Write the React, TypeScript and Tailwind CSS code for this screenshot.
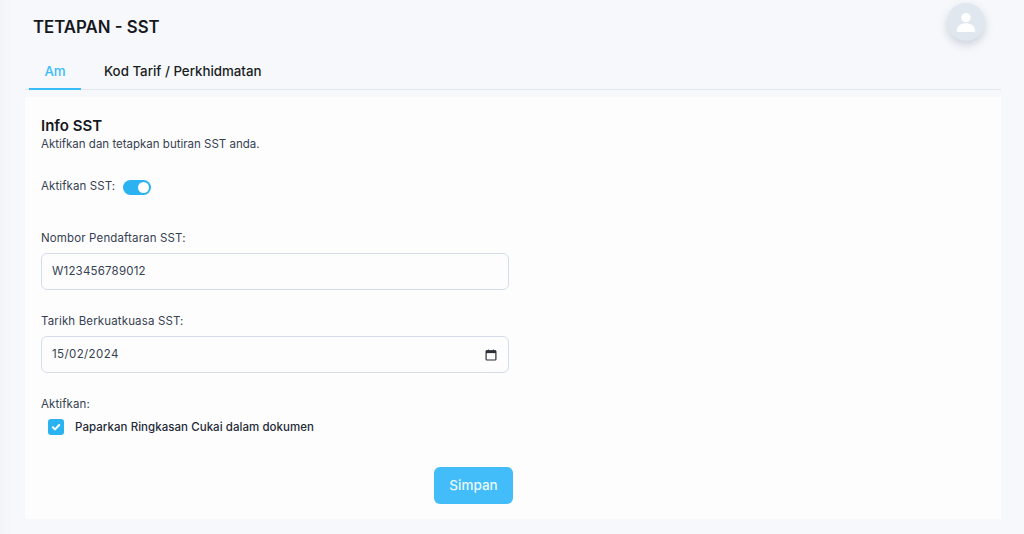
import React from "react";

export default function App() {
  return (
    <div className="flex h-[534px] w-[1024px] overflow-hidden bg-[#f6f8fb] font-['Inter','Liberation_Sans',sans-serif] antialiased">
      <div className="h-full w-[12px] shrink-0 bg-gradient-to-r from-[#f2f4f7] to-[#f6f8fb]" />
      <main className="flex min-w-0 flex-1 flex-col pl-[13px] pr-[23px]">
        <header className="flex h-[57px] shrink-0 items-start justify-between">
          <h1 className="ml-[8px] mt-[15px] text-[16.8px] leading-[24px] font-semibold text-[#16181d]">TETAPAN - SST</h1>
          <div className="mr-[16px] mt-[3px] flex h-[38px] w-[38px] items-center justify-center rounded-full bg-[#e1e7ef] shadow-[0_4px_8px_rgba(100,116,139,0.28)]">
            <svg viewBox="0 0 24 24" className="h-[26px] w-[26px]" fill="#ffffff">
              <circle cx="12" cy="8" r="4.3" />
              <path d="M3.5 20.2c0-4.4 3.6-7 8.5-7s8.5 2.6 8.5 7c0 .6-.4 1-1 1h-15c-.6 0-1-.4-1-1z" />
            </svg>
          </div>
        </header>
        <nav className="flex h-[33px] shrink-0 border-b border-[#e2e8f0] pl-[4px]">
          <div className="flex h-[33px] w-[52px] justify-center border-b-2 border-[#38bdf8] pt-[5px] text-[13.3px] leading-[18px] font-medium text-[#38bdf8]">Am</div>
          <div className="ml-[23px] pt-[5px] text-[13.3px] leading-[18px] font-medium text-[#1a1d23]">Kod Tarif / Perkhidmatan</div>
        </nav>
        <section className="mt-[7px] flex h-[422px] flex-col bg-[#fdfdfe] pl-[16px] pr-[16px]">
          <h2 className="mt-[19px] text-[15px] leading-[19px] font-semibold text-[#16181d]">Info SST</h2>
          <p className="text-[11.5px] leading-[18px] text-[#374151]">Aktifkan dan tetapkan butiran SST anda.</p>
          <div className="mt-[22px] flex h-[24px] items-center gap-[8px]">
            <span className="text-[11.5px] tracking-[0.1px] text-[#374151]">Aktifkan SST:</span>
            <span className="flex h-[15px] w-[28px] items-center justify-end rounded-full bg-[#2ab3f0] pr-[2px]">
              <span className="h-[11px] w-[11px] rounded-full bg-white" />
            </span>
          </div>
          <label className="mt-[31px] block text-[11.5px] leading-[16px] tracking-[0.14px] text-[#374151]">Nombor Pendaftaran SST:</label>
          <div className="mt-[7px] flex h-[37px] w-[468px] items-center rounded-[6px] border border-[#d5dce9] bg-[#fdfdfe] pl-[10px] text-[11.5px] tracking-[0.2px] text-[#374151]">W123456789012</div>
          <label className="mt-[23px] block text-[11.5px] leading-[16px] tracking-[0.14px] text-[#374151]">Tarikh Berkuatkuasa SST:</label>
          <div className="mt-[7px] flex h-[37px] w-[468px] items-center justify-between rounded-[6px] border border-[#d5dce9] bg-[#fdfdfe] pl-[10px] pr-[11px] text-[11.5px] tracking-[0.4px] text-[#374151]">
            <span>15/02/2024</span>
            <svg viewBox="0 0 12 12" className="h-[12px] w-[12px]">
              <rect x="1.1" y="1.8" width="9.8" height="9.2" rx="0.8" fill="none" stroke="#2b2f36" strokeWidth="1.2" />
              <rect x="1" y="1.5" width="10" height="2.6" fill="#2b2f36" />
              <rect x="3" y="0.6" width="1" height="1.4" fill="#2b2f36" />
              <rect x="8" y="0.6" width="1" height="1.4" fill="#2b2f36" />
            </svg>
          </div>
          <span className="mt-[23px] text-[11.5px] leading-[16px] tracking-[0.1px] text-[#374151]">Aktifkan:</span>
          <div className="ml-[7px] mt-[7px] flex items-center gap-[11px]">
            <span className="flex h-[16px] w-[16px] items-center justify-center rounded-[3px] bg-[#2ab3f0]">
              <svg viewBox="0 0 16 16" className="h-[16px] w-[16px]" fill="none" stroke="#ffffff" strokeWidth="2" strokeLinecap="round" strokeLinejoin="round">
                <path d="M4.8 8.3l2.2 2.1 4.2-4.4" />
              </svg>
            </span>
            <span className="text-[11.5px] leading-[16px] font-medium tracking-[0.05px] text-[#1f2937]">Paparkan Ringkasan Cukai dalam dokumen</span>
          </div>
          <button className="ml-[393px] mt-[32px] h-[37px] w-[79px] rounded-[6px] bg-[#42bdf9] text-[13.5px] font-medium text-[#eaf8ff]">Simpan</button>
        </section>
      </main>
    </div>
  );
}
